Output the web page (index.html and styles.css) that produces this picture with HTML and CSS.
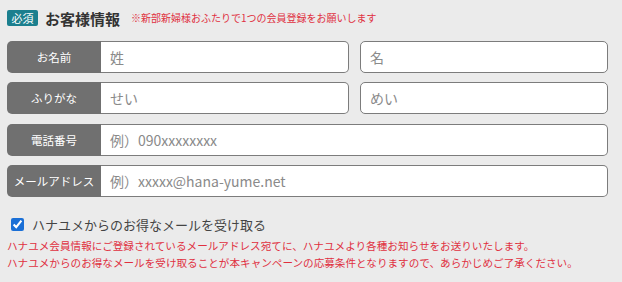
FILE: index.html
```
<!DOCTYPE html>
<html lang="ja">
<head>
<meta charset="utf-8">
<link rel="stylesheet" href="styles.css">
</head>
<body>
<div class="form">
  <div class="head">
    <span class="badge">必須</span>
    <span class="title">お客様情報</span>
    <span class="note">※新部新婦様おふたりで1つの会員登録をお願いします</span>
  </div>
  <div class="rows">
    <div class="row two">
      <div class="label">お名前</div>
      <div class="field joined">姓</div>
      <div class="field">名</div>
    </div>
    <div class="row two">
      <div class="label">ふりがな</div>
      <div class="field joined">せい</div>
      <div class="field">めい</div>
    </div>
    <div class="row one">
      <div class="label">電話番号</div>
      <div class="field joined">例）090xxxxxxxx</div>
    </div>
    <div class="row one">
      <div class="label">メールアドレス</div>
      <div class="field joined">例）xxxxx@hana-yume.net</div>
    </div>
  </div>
  <label class="check">
    <input type="checkbox" checked>
    <span>ハナユメからのお得なメールを受け取る</span>
  </label>
  <p class="warn">ハナユメ会員情報にご登録されているメールアドレス宛てに、ハナユメより各種お知らせをお送りいたします。<br>ハナユメからのお得なメールを受け取ることが本キャンペーンの応募条件となりますので、あらかじめご了承ください。</p>
</div>
</body>
</html>
```
FILE: styles.css
```
html, body {
  margin: 0;
  padding: 0;
  background: #ebebeb;
}
body {
  font-family: "Noto Sans CJK JP", "Noto Sans", sans-serif;
  color: #333;
}
.form {
  width: 601px;
  padding: 10px 0 0 7px;
}
.head {
  display: flex;
  align-items: center;
  height: 16px;
}
.badge {
  display: inline-flex;
  align-items: center;
  justify-content: center;
  width: 31px;
  height: 16px;
  background: #1b7f8e;
  color: #fff;
  font-size: 11px;
  border-radius: 2px;
  line-height: 1;
}
.title {
  margin-left: 7px;
  font-size: 15px;
  font-weight: bold;
  color: #333;
  line-height: 1;
}
.note {
  margin-left: 11px;
  font-size: 10px;
  color: #e0303f;
  line-height: 1;
}
.rows {
  margin-top: 15px;
  display: flex;
  flex-direction: column;
  gap: 9.3px;
}
.row {
  display: grid;
  height: 32px;
}
.row.two {
  grid-template-columns: 94px 248px 259px;
}
.row.two .field:last-child {
  margin-left: 11px;
}
.row.one {
  grid-template-columns: 94px 1fr;
}
.label {
  background: #707070;
  color: #fff;
  font-size: 11.5px;
  display: flex;
  align-items: center;
  justify-content: center;
  border-radius: 5px 0 0 5px;
}
.field {
  background: #fff;
  border: 1px solid #7c7c7c;
  border-radius: 5px;
  display: flex;
  align-items: center;
  padding-left: 9px;
  font-size: 14px;
  color: #8a8a8a;
  box-sizing: border-box;
}
.field.joined {
  border-left: none;
  border-radius: 0 5px 5px 0;
}
.check {
  display: flex;
  align-items: center;
  margin-top: 19px;
  margin-left: 3px;
  font-size: 13px;
  line-height: 18px;
  color: #444;
}
.check input {
  width: 13px;
  height: 13px;
  margin: 0 8px 0 1px;
  accent-color: #1a6fd6;
}
.warn {
  margin: 3px 0 0 0;
  font-size: 10.6px;
  line-height: 17px;
  color: #e0303f;
}
```
